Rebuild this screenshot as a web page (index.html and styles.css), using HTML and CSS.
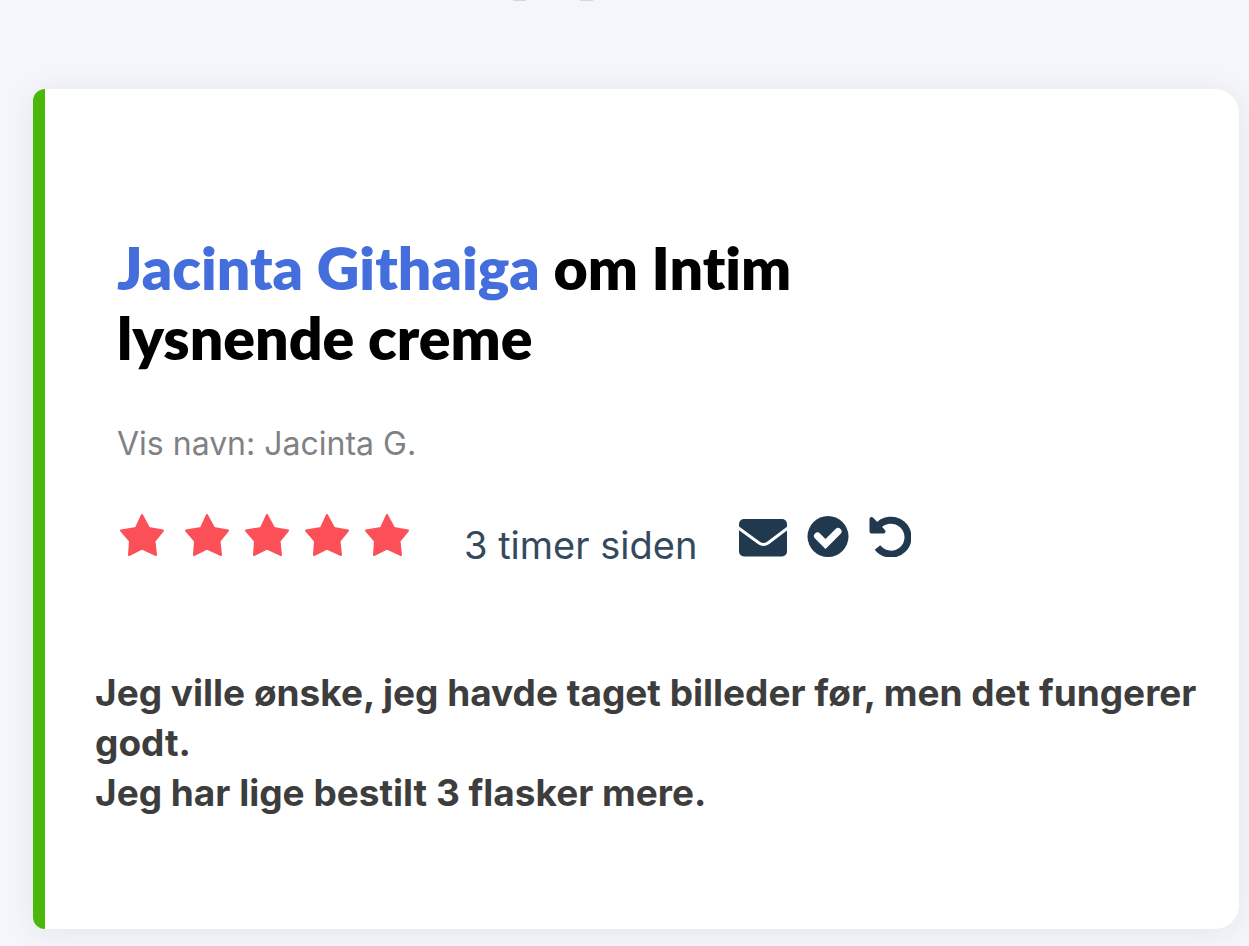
FILE: index.html
```html
<!DOCTYPE html>
<html lang="da">
<head>
<meta charset="utf-8">
<meta name="viewport" content="width=device-width, initial-scale=1">
<title>Anmeldelse</title>
<link rel="stylesheet" href="styles.css">
</head>
<body>
<main class="page">
<div class="edge" aria-hidden="true"><span class="tick"></span><span class="tick"></span></div>
<article class="review">
<header class="review-head">
<h2 class="title"><a class="author" href="#">Jacinta Githaiga</a> om Intim<br>lysnende creme</h2>
<p class="display-name">Vis navn: Jacinta G.</p>
<div class="meta">
<div class="stars" role="img" aria-label="5 af 5 stjerner">
<svg class="star first" viewBox="0 0 46 44"><path d="M23 2 30 15 44 17.500 35.500 28 37 42 23 35.500 10 42 11 28 2 17.500 17 15Z"/></svg>
<svg class="star" viewBox="0 0 46 44"><path d="M23 2 30 15 44 17.500 35.500 28 37 42 23 35.500 10 42 11 28 2 17.500 17 15Z"/></svg>
<svg class="star" viewBox="0 0 46 44"><path d="M23 2 30 15 44 17.500 35.500 28 37 42 23 35.500 10 42 11 28 2 17.500 17 15Z"/></svg>
<svg class="star" viewBox="0 0 46 44"><path d="M23 2 30 15 44 17.500 35.500 28 37 42 23 35.500 10 42 11 28 2 17.500 17 15Z"/></svg>
<svg class="star" viewBox="0 0 46 44"><path d="M23 2 30 15 44 17.500 35.500 28 37 42 23 35.500 10 42 11 28 2 17.500 17 15Z"/></svg>
</div>
<time class="time">3 timer siden</time>
<div class="status">
<svg class="mail" viewBox="0 0 48 42"><rect y="4" width="48" height="37.500" rx="5"/><path class="fold" d="M-2 12 20 28Q24.500 31 29 28L50 12"/></svg>
<svg class="check" viewBox="0 0 42 42"><circle cx="21" cy="21.500" r="20.500"/><path class="tick-mark" d="M10.500 21 18.500 29 31 16.500"/></svg>
<svg class="undo" viewBox="0 0 42 42"><path class="head" d="M2.500 4V16.500H14.500Z"/><path class="arc" d="M8 12.500A17 17 0 1 1 8.500 32.500"/></svg>
</div>
</div>
</header>
<p class="body">Jeg ville ønske, jeg havde taget billeder før, men det fungerer godt.<br>Jeg har lige bestilt 3 flasker mere.</p>
</article>
</main>
</body>
</html>
```
FILE: styles.css
```css
* { box-sizing: border-box; }
body { margin: 0; min-height: 100vh; background: #f4f6fb; font-family: Inter, "Liberation Sans", sans-serif; }
.page { padding: 0 10px 17px 33px; }
.edge { display: flex; gap: 54px; height: 89px; padding-left: 480px; }
.tick { width: 13px; height: 1px; background: #d5d6da; }
.review { padding: 144px 24px 111px 50px; border-left: 12px solid #4ab80a; border-radius: 12px 24px 24px 12px; background: #fff; box-shadow: 0 4px 32px rgb(30 35 45 / 8%); }
.review-head { padding-left: 22px; }
.title { margin: 0; font: 800 59px/70px Lato, sans-serif; font-variant-ligatures: none; color: #000; }
.author { color: #446edc; text-decoration: none; }
.display-name { margin: 47px 0 0; font-size: 32px; line-height: 48px; color: #808184; }
.meta { display: flex; align-items: flex-end; margin-top: 41px; height: 48px; padding-left: 2px; }
.stars { display: flex; gap: 14px; }
.star { width: 46px; height: 44px; fill: #fc5058; stroke: #fc5058; stroke-width: 2; stroke-linejoin: round; }
.first { margin-right: 5px; }
.time { margin-left: 54px; font-size: 38px; line-height: 24px; color: #34495e; }
.status { display: flex; align-items: center; gap: 20px; margin-left: 42px; fill: #20394e; }
.mail { width: 48px; height: 42px; }
.check, .undo { width: 42px; height: 42px; }
.fold { fill: none; stroke: #fff; stroke-width: 3; }
.tick-mark { fill: none; stroke: #fff; stroke-width: 7; stroke-linecap: round; }
.head { stroke: #20394e; stroke-width: 4; stroke-linejoin: round; }
.arc { fill: none; stroke: #20394e; stroke-width: 7; }
.body { margin: 111px 0 0; font-size: 37px; font-weight: 700; line-height: 50px; color: #3d3d3d; }
```
